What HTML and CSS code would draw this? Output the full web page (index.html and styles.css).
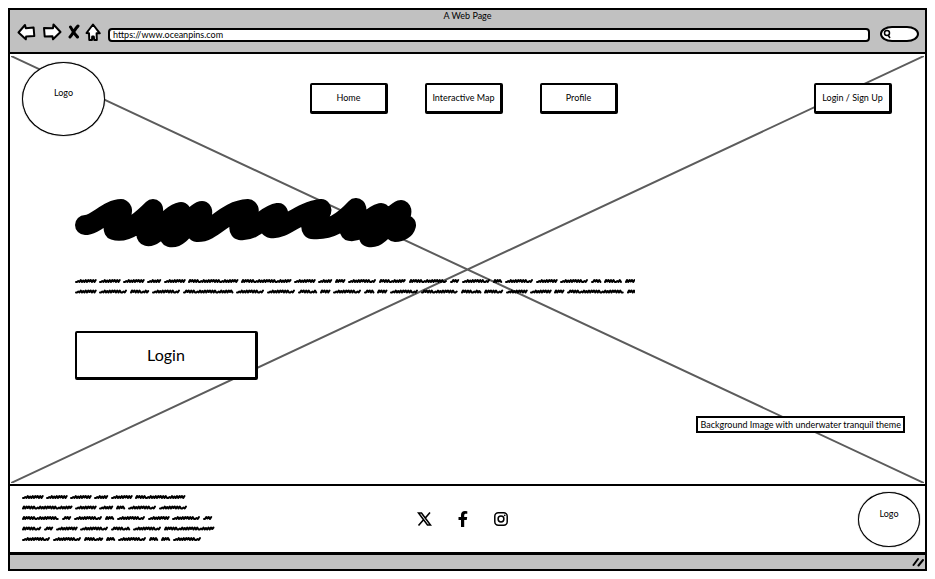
FILE: index.html
```html
<!DOCTYPE html>
<html lang="en">
<head>
<meta charset="utf-8">
<title>A Web Page</title>
<link rel="stylesheet" href="styles.css">
</head>
<body>
<div class="window">
  <header class="chrome">
    <div class="title">A Web Page</div>
    <div class="toolbar">
      <button class="tool" aria-label="Back"><svg width="20" height="20" viewBox="0 0 20 20"><path d="M1.500 10.500 8 3l.800 3.200 7.800-.700.700 8.500-8.200.500-.300 2.800z"/></svg></button>
      <button class="tool" aria-label="Forward"><svg width="20" height="20" viewBox="0 0 20 20"><path d="M18.500 10 11.500 2.500l-.5 3.700-9-.2.700 8.500 7.800-.2.500 3z"/></svg></button>
      <button class="tool stop" aria-label="Stop"><svg width="12" height="20" viewBox="0 0 12 20"><path d="M2.500 5c2 3 3.500 7 7 10M10 4C6.500 7 5 12 2 15"/></svg></button>
      <button class="tool home" aria-label="Home page"><svg width="16" height="20" viewBox="0 0 16 20"><path d="M8 2.500 1.500 11l2.500.3.300 6.700H7l.2-3.500h1.600l.4 3.500h2.600l-.2-6.700H14.800z"/></svg></button>
      <input class="address" aria-label="Address" value="https://www.oceanpins.com">
      <label class="search"><svg width="8" height="10" viewBox="0 0 8 10"><circle cx="4" cy="4" r="2.500"/><path d="m5 6 2 3"/></svg><input aria-label="Search"></label>
    </div>
  </header>
  <main class="hero">
    <svg class="cross" viewBox="0 0 100 100" preserveAspectRatio="none" aria-hidden="true"><path d="M0 0 100 100M100 0 0 100"/></svg>
    <div class="topbar">
      <div class="logo">Logo</div>
      <nav class="nav"><a class="box" href="#">Home</a><a class="box" href="#">Interactive Map</a><a class="box" href="#">Profile</a></nav>
      <a class="box signup" href="#">Login / Sign Up</a>
    </div>
    <div class="intro">
      <svg class="headline" width="342" height="50" viewBox="0 0 342 50" aria-hidden="true"><path d="M10 27 C20 27 34 11 46 11 C51 14 36 26 39 32 C52 36 66 23 78 11 C80 18 68 32 72 38 C82 40 92 17 106 14 C108 18 91 32 95 39 C107 42 116 16 127 13 C129 18 118 27 122 34 C138 35 150 12 173 11 C177 15 161 26 165 32 C180 34 190 17 203 15 C205 19 190 27 196 30 C208 33 225 13 246 11 C249 15 233 25 237 31 C255 33 268 24 281 10 C284 16 271 28 275 33 C286 35 293 18 306 15 C307 21 290 32 294 39 C307 42 315 16 326 12 C329 18 315 29 320 34 C326 34 330 31 331 27"/></svg>
      <svg class="scribble copy" width="560" height="18" aria-hidden="true" data-lines="21 21 21 14 21 50 50 21 14 10 28 27 38 9 28 9 28 21 28 10 18 10|21 28 19 28 50 28 28 19 10 28 10 10 28 37 20 19 21 21 10 57 9"></svg>
      <button class="box login">Login</button>
    </div>
    <div class="caption">Background Image with underwater tranquil theme</div>
  </main>
  <footer class="footer">
    <svg class="scribble" width="194" height="50" aria-hidden="true" data-lines="21 21 21 14 21 50|50 21 14 9 28 28|37 9 28 9 28 21 28 9|19 9 21 28 19 28 50|28 28 19 9 28 9 9 28"></svg>
    <div class="social">
      <a href="#" aria-label="X"><svg class="x" width="15" height="14" viewBox="0 0 15 14"><path d="M1.500 1H4.500L13.500 13H10.500zM13 .5 8.300 6M6.300 8 1.500 13.500"/></svg></a>
      <a href="#" aria-label="Facebook"><svg width="10" height="16" viewBox="0 0 10 16"><path d="M3 16V9H.500V6H3V4c0-2.700 1.500-4 4-4l2.300.2v2.600H8C6.700 2.800 6.200 3.400 6.200 4.400V6h3l-.5 3H6.200v7z"/></svg></a>
      <a href="#" aria-label="Instagram"><svg class="insta" width="14" height="14" viewBox="0 0 14 14"><rect x=".8" y=".8" width="12.400" height="12.400" rx="3.500"/><circle cx="7" cy="7" r="2.900"/><circle class="dot" cx="10.700" cy="3.300" r=".9"/></svg></a>
    </div>
    <div class="logo small">Logo</div>
  </footer>
  <div class="status"><svg width="12" height="10" viewBox="0 0 12 10"><path d="M1.500 8 6 2M6.500 8.500 11 3"/></svg></div>
</div>
<script src="script.js"></script>
</body>
</html>
```
FILE: styles.css
```css
* { box-sizing: border-box; }
body { margin: 0; padding: 8px; min-height: 100vh; display: flex; background: #fff; color: #000; font: 9px/12px Lato, sans-serif; }
a { color: inherit; text-decoration: none; }
button, input { font: inherit; color: inherit; }
svg { display: block; }
.window { flex: 1; display: flex; flex-direction: column; }
.chrome { background: #c1c1c1; border: 2px solid #000; height: 46px; }
.title { text-align: center; }
.toolbar { display: flex; align-items: center; padding: 0 6px 0 7px; height: 19px; }
.tool { border: 0; background: none; padding: 0; margin-right: 5px; }
.tool path { fill: #fff; stroke: #000; stroke-width: 2; stroke-linejoin: round; }
.stop { margin-left: 1px; }
.tool.stop path { fill: none; stroke-width: 3; stroke-linecap: round; }
.home { margin-right: 7px; }
.address { flex: 1; min-width: 0; height: 14px; margin-top: 6px; padding: 0 3px; border: 2px solid #000; border-radius: 4px; background: #fff; }
.search { display: flex; align-items: center; width: 39px; height: 16px; margin: 5px 0 0 10px; padding-left: 1px; background: #fff; border: 2px solid #000; border-radius: 12px / 8px; }
.search svg { flex: none; fill: none; stroke: #000; stroke-width: 1.5; }
.search input { width: 20px; height: 8px; padding: 0; border: 0; background: none; }
.hero { position: relative; flex: 1; display: flex; flex-direction: column; border: solid #000; border-width: 0 2px; }
.cross { position: absolute; inset: 2px 1px 1px; width: calc(100% - 2px); height: calc(100% - 3px); }
.cross path { stroke: #5c5c5c; stroke-width: 2; vector-effect: non-scaling-stroke; fill: none; }
.topbar, .intro, .caption { position: relative; }
.topbar { display: grid; grid-template-columns: 1fr auto 1fr; align-items: center; padding: 8px 33px 0 12px; }
.logo { width: 83px; height: 74px; border: 1px solid #000; box-shadow: 0 0 1px #000; border-radius: 50%; background: #fff; display: flex; justify-content: center; padding-top: 24px; }
.nav { display: flex; gap: 37px; margin: 0 0 2px 14px; }
.box { display: flex; align-items: center; justify-content: center; width: 78px; height: 31px; padding: 0; background: #fff; border: solid #000; border-width: 2px 3px 3px 2px; border-radius: 2px; white-space: nowrap; }
.signup { justify-self: end; margin-bottom: 2px; }
.intro { padding: 62px 65px 0; }
.headline path { fill: none; stroke: #000; stroke-width: 20; stroke-linecap: round; stroke-linejoin: round; }
.copy { margin-top: 30px; }
.scribble path { fill: none; stroke: #000; stroke-linecap: round; stroke-linejoin: round; stroke-width: 2; }
.login { width: 183px; height: 49px; margin-top: 35px; font-size: 16px; }
.caption { align-self: flex-end; margin: auto 20px 51px 0; padding: 1px 2px; height: 17px; border: 2px solid #000; background: #fff; }
.footer { display: grid; grid-template-columns: 1fr auto 1fr; align-items: center; height: 70px; padding: 0 5px 0 12px; border: 2px solid #000; background: #fff; }
.social { display: flex; align-items: center; gap: 26px; margin-right: 17px; }
.x { fill: none; stroke: #000; stroke-width: 1.6; }
.insta { fill: none; stroke: #000; stroke-width: 1.5; }
.insta .dot { fill: #000; stroke: none; }
.small { justify-self: end; width: 62px; height: 55px; padding-top: 15px; }
.status { display: flex; align-items: center; justify-content: flex-end; height: 17px; padding-right: 1px; background: #c1c1c1; border: solid #000; border-width: 1px 2px 2px; }
.status path { stroke: #000; stroke-width: 2; stroke-linecap: round; }
```
FILE: script.js
```js
// Fill each placeholder paragraph with one dense squiggle per word width.
var offsets = [1, 0, 1, -1, 1, -0.5, 1, -1, 1, -1, 0.5, -1, 1, -1, 1, -1, 1];
document.querySelectorAll('.scribble').forEach(function (svg) {
  svg.dataset.lines.split('|').forEach(function (line, row) {
    var x = 0, y = row * 10.5 + 3;
    line.split(' ').map(Number).forEach(function (width, word) {
      var shift = width % 7 === 0 ? 0 : 7 + word % 3;
      var d = 'M' + (x + 1) + ' ' + (y + 1);
      for (var step = 2, i = 0; step < width; step += 1.25, i++) {
        d += 'L' + (x + step) + ' ' + (y + offsets[(i + shift) % offsets.length]);
      }
      var path = document.createElementNS('http://www.w3.org/2000/svg', 'path');
      path.setAttribute('d', d);
      svg.appendChild(path);
      x += width + 3;
    });
  });
});
```
